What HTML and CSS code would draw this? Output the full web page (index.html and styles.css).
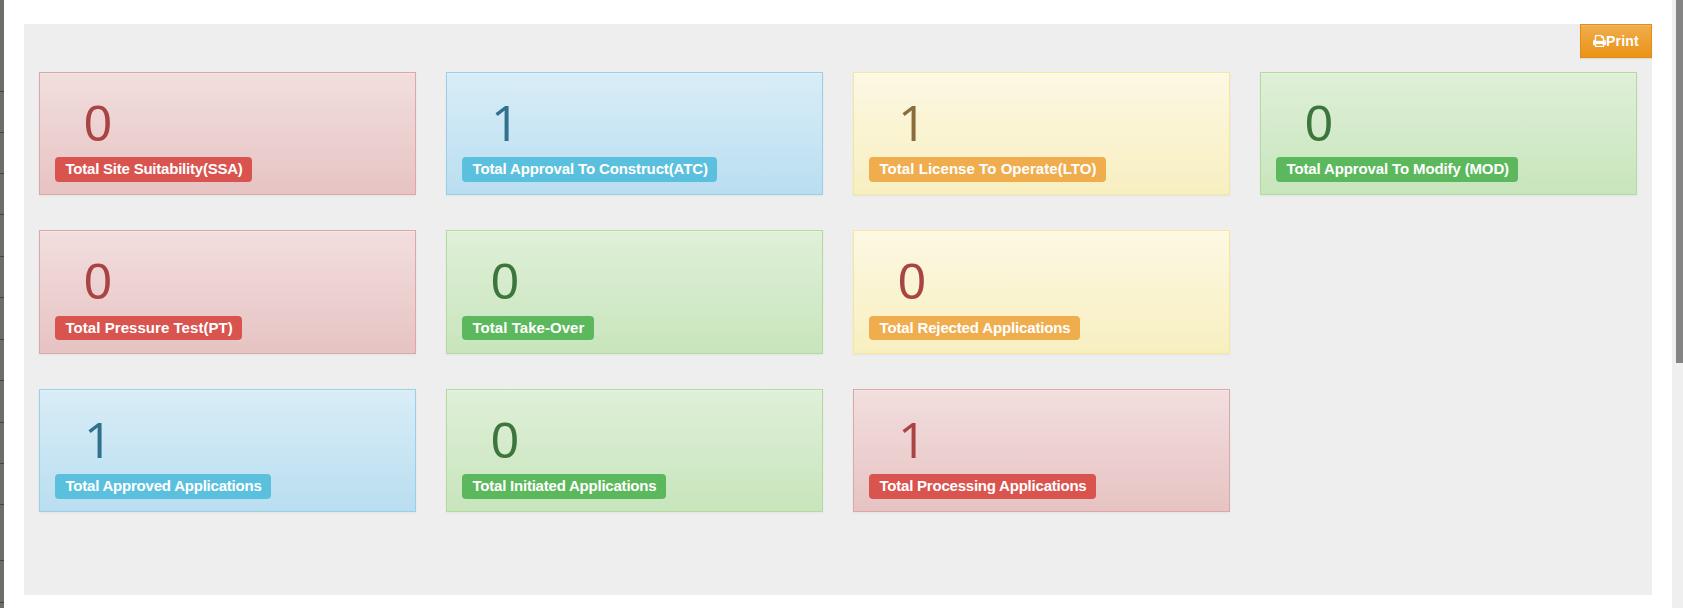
FILE: index.html
```html
<!DOCTYPE html>
<html lang="en">
<head>
<meta charset="utf-8">
<title>Applications</title>
<link rel="stylesheet" href="styles.css">
</head>
<body>
<nav class="rail">
<i></i><i></i><i></i><i></i><i class="tall"></i><i></i><i class="tall"></i><i></i><i class="tall"></i><i></i><i></i><i class="split"></i><i class="tall"></i>
</nav>
<main class="page">
<section class="panel">
<div class="toolbar"><button class="print"><svg class="print-icon" viewBox="0 128 1664 1536" width="13" height="12"><path fill="#fff" d="M384 1536h896v-256H384v256zm0-640h896V512h-160q-40 0-68-28t-28-68V256H384v640zm1152 64q0-26-19-45t-45-19-45 19-19 45 19 45 45 19 45-19 19-45zm128 0v416q0 13-9.500 22.500t-22.500 9.500h-224v160q0 40-28 68t-68 28H352q-40 0-68-28t-28-68v-160H32q-13 0-22.500-9.500T0 1376V960q0-79 56.500-135.500T192 768h64V224q0-40 28-68t68-28h672q40 0 88 20t76 48l152 152q28 28 48 76t20 88v256h64q79 0 135.500 56.500T1664 960z"/></svg>Print</button></div>
<div class="grid">
<div class="card danger"><div class="num">0</div><span class="label ls-tight">Total Site Suitability(SSA)</span></div>
<div class="card info"><div class="num one">1</div><span class="label ls-snug">Total Approval To Construct(ATC)</span></div>
<div class="card warning"><div class="num one">1</div><span class="label ls-wide">Total License To Operate(LTO)</span></div>
<div class="card success"><div class="num">0</div><span class="label ls-snug">Total Approval To Modify (MOD)</span></div>
<div class="card middle danger"><div class="num">0</div><span class="label ls-wide">Total Pressure Test(PT)</span></div>
<div class="card middle success"><div class="num">0</div><span class="label ls-wide">Total Take-Over</span></div>
<div class="card middle warning"><div class="num num-red">0</div><span class="label ls-mid">Total Rejected Applications</span></div>
<div class="card info row-start"><div class="num one">1</div><span class="label ls-tight">Total Approved Applications</span></div>
<div class="card success"><div class="num">0</div><span class="label ls-tight">Total Initiated Applications</span></div>
<div class="card danger"><div class="num one">1</div><span class="label ls-tight">Total Processing Applications</span></div>
</div>
</section>
</main>
<div class="scrollbar"><div class="thumb"></div></div>
</body>
</html>
```
FILE: styles.css
```css
* { box-sizing: border-box; }
body { margin: 0; height: 608px; display: flex; overflow: hidden; background: #fff; font-family: "Liberation Sans", Arial, sans-serif; }
.rail { width: 4px; background: #6f6d6a; padding-top: 51px; flex: none; }
.rail i { display: block; height: 1px; margin-top: 40px; background: #454442; }
.rail .tall { margin-top: 41px; }
.rail .split { margin-top: 55px; }
.page { flex: 1; padding: 24px 20px 13px; }
.panel { height: 571px; background: #eee; }
.toolbar { display: flex; justify-content: flex-end; height: 48px; }
.print { display: flex; align-items: center; justify-content: center; width: 72px; height: 34px; padding: 0; border: 1px solid #e38d13; background: linear-gradient(#f0ad4e, #eb9316); box-shadow: inset 0 1px 0 rgba(255,255,255,.15), 0 1px 1px rgba(0,0,0,.075); color: #fff; font: bold 14px "Liberation Sans", Arial, sans-serif; letter-spacing: .2px; }
.print-icon { display: block; stroke: #fff; stroke-width: 40; }
.grid { display: grid; grid-template-columns: repeat(4, 377px); grid-auto-rows: 123.4px; gap: 35px 30px; padding: 0 15px; }
.card { padding: 17px 15px 0; border: 1px solid; box-shadow: inset 0 1px 0 rgba(255,255,255,.25), 0 1px 2px rgba(0,0,0,.05); }
.row-start { grid-column-start: 1; }
.num { height: 67px; padding-left: 29px; font-size: 50px; line-height: 69px; }
.one { padding-left: 29px; font-family: "Open Sans", "Noto Sans", sans-serif; line-height: 65px; }
.label { display: inline-block; height: 25px; padding: 0 9.5px 0 10.5px; border-radius: 4px; color: #fff; font-size: 15px; font-weight: bold; line-height: 23px; white-space: nowrap; vertical-align: top; }
.middle .num { height: 68px; }
.middle .label { height: 24px; }
.ls-tight { letter-spacing: -.22px; }
.ls-mid { letter-spacing: -.15px; }
.ls-snug { letter-spacing: -.13px; }
.ls-wide { letter-spacing: .05px; }
.danger { background: linear-gradient(#f2dede, #e7c3c3); border-color: #dca7a7; color: #a94442; }
.danger .label { background: #d9534f; }
.info { background: linear-gradient(#d9edf7, #b9def0); border-color: #9acfea; color: #31708f; }
.info .label { background: #5bc0de; }
.warning { background: linear-gradient(#fcf8e3, #f8efc0); border-color: #f5e79e; color: #8a6d3b; }
.warning .label { background: #f0ad4e; }
.success { background: linear-gradient(#dff0d8, #c8e5bc); border-color: #b2dba1; color: #3c763d; }
.success .label { background: #5cb85c; }
.num-red { color: #a94442; }
.scrollbar { flex: none; width: 11px; background: #efefef; padding-left: 4px; }
.thumb { height: 363px; background: #848484; }
```
